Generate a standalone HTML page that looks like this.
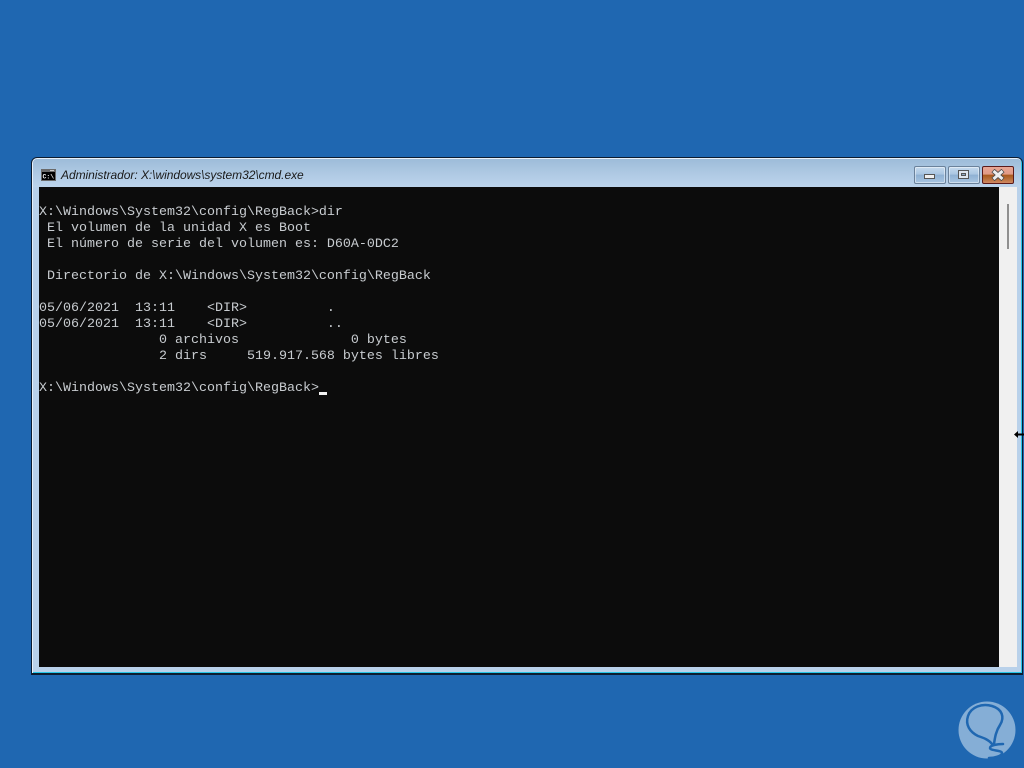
<!DOCTYPE html>
<html>
<head>
<meta charset="utf-8">
<style>
html,body{margin:0;padding:0;width:1024px;height:768px;overflow:hidden;background:#1f67b1;}
div{position:absolute;box-sizing:border-box;}
#win{left:31px;top:157px;width:992px;height:518px;background:#b9d1ea;border:1px solid #0c1c30;border-bottom:2px solid #0c1c30;border-radius:6px 6px 0 0;box-shadow:inset 1px 1px 0 #e8f1fa, inset -1px -1px 0 #26c6e8;}
#tb{left:33px;top:159px;width:988px;height:28px;background:linear-gradient(180deg,#9dbcd9 0,#b0cae4 55%,#bcd4ec 100%);border-radius:4px 4px 0 0;}
#title{left:61px;top:168px;font:italic 12px "Liberation Sans",sans-serif;color:#1a1a1a;white-space:nowrap;letter-spacing:-.05px;line-height:15px;}
#con{left:39px;top:187px;width:960px;height:480px;background:#0c0c0c;}
pre{position:absolute;left:39px;top:205px;margin:0;font:13.33px/16px "Liberation Mono",monospace;color:#c8ccd0;}
#sb{left:999px;top:187px;width:18px;height:480px;background:#f0f0f0;}
#th{left:1007px;top:204px;width:2px;height:45px;background:#8f8f8f;}
#cur{left:319px;top:392px;width:8px;height:3px;background:#f2f2f2;}
.btn{top:166px;height:18px;border-radius:2px;}
.b1{background:linear-gradient(180deg,#c6daee 0,#aac6e2 45%,#8fb1d3 50%,#a9c6e2 100%);border:1px solid #6b829b;box-shadow:inset 0 0 0 1px rgba(255,255,255,.45);}
</style>
</head>
<body>
<div id="win"></div>
<div id="tb"></div>
<svg style="position:absolute;left:41px;top:169px" width="16" height="13" viewBox="0 0 16 13"><rect x="0" y="0" width="15" height="12" fill="#6a6a6a"/><rect x="1" y="3" width="13" height="8" fill="#000"/><rect x="9" y="1" width="4" height="1" fill="#ccc"/><text x="1.5" y="9.5" font-family="Liberation Mono" font-size="6.5" font-weight="bold" fill="#f2f2f2">C:\</text></svg>
<div id="title">Administrador: X:\windows\system32\cmd.exe</div>
<div class="btn b1" style="left:914px;width:32px"></div>
<div style="left:924px;top:174px;width:11px;height:5px;background:#f0f0f0;border:1px solid #555"></div>
<div class="btn b1" style="left:948px;width:32px"></div>
<div style="left:958px;top:170px;width:11px;height:9px;background:#dfe6ee;border:1px solid #555"></div>
<div style="left:961px;top:173px;width:5px;height:3px;background:#8fa9c4;border:1px solid #555"></div>
<div class="btn" style="left:982px;width:32px;background:linear-gradient(180deg,#e8a695 0,#e19a85 45%,#a8581c 50%,#b86f3a 75%,#d08a66 100%);border:1px solid #5a1a1a"></div>
<svg style="position:absolute;left:991px;top:169px" width="14" height="12" viewBox="0 0 14 12"><path d="M2 1.5L12 10.5M12 1.5L2 10.5" stroke="#4a4a4a" stroke-width="4.6"/><path d="M2.5 2L11.5 10M11.5 2L2.5 10" stroke="#eeeeee" stroke-width="3"/></svg>
<div id="con"></div>
<pre>X:\Windows\System32\config\RegBack&gt;dir
 El volumen de la unidad X es Boot
 El número de serie del volumen es: D60A-0DC2

 Directorio de X:\Windows\System32\config\RegBack

05/06/2021  13:11    &lt;DIR&gt;          .
05/06/2021  13:11    &lt;DIR&gt;          ..
               0 archivos              0 bytes
               2 dirs     519.917.568 bytes libres

X:\Windows\System32\config\RegBack&gt;</pre>
<div id="cur"></div>
<div id="sb"></div>
<div id="th"></div>
<svg style="position:absolute;left:1013px;top:429px" width="11" height="11" viewBox="0 0 11 11"><path d="M1 5.5L5 2V4.5H11V6.5H5V9Z" fill="#000"/></svg>
<svg style="position:absolute;left:958px;top:701px" width="58" height="58" viewBox="0 0 58 58"><circle cx="29" cy="29" r="28.5" fill="#85aed6"/><path d="M36 43C37 36 38 30 42 24C47 16 44 8 34 5C24 2 13 6 10 15C7 24 12 31 20 35C26 37 31 39 34 43" fill="none" stroke="#1f67b1" stroke-width="2.5" stroke-linecap="round"/><path d="M45 43C40 43 32 44 32 47C32 50 44 49 44 52C44 55 36 57 31 57" fill="none" stroke="#1f67b1" stroke-width="2.5" stroke-linecap="round"/></svg>
</body>
</html>
